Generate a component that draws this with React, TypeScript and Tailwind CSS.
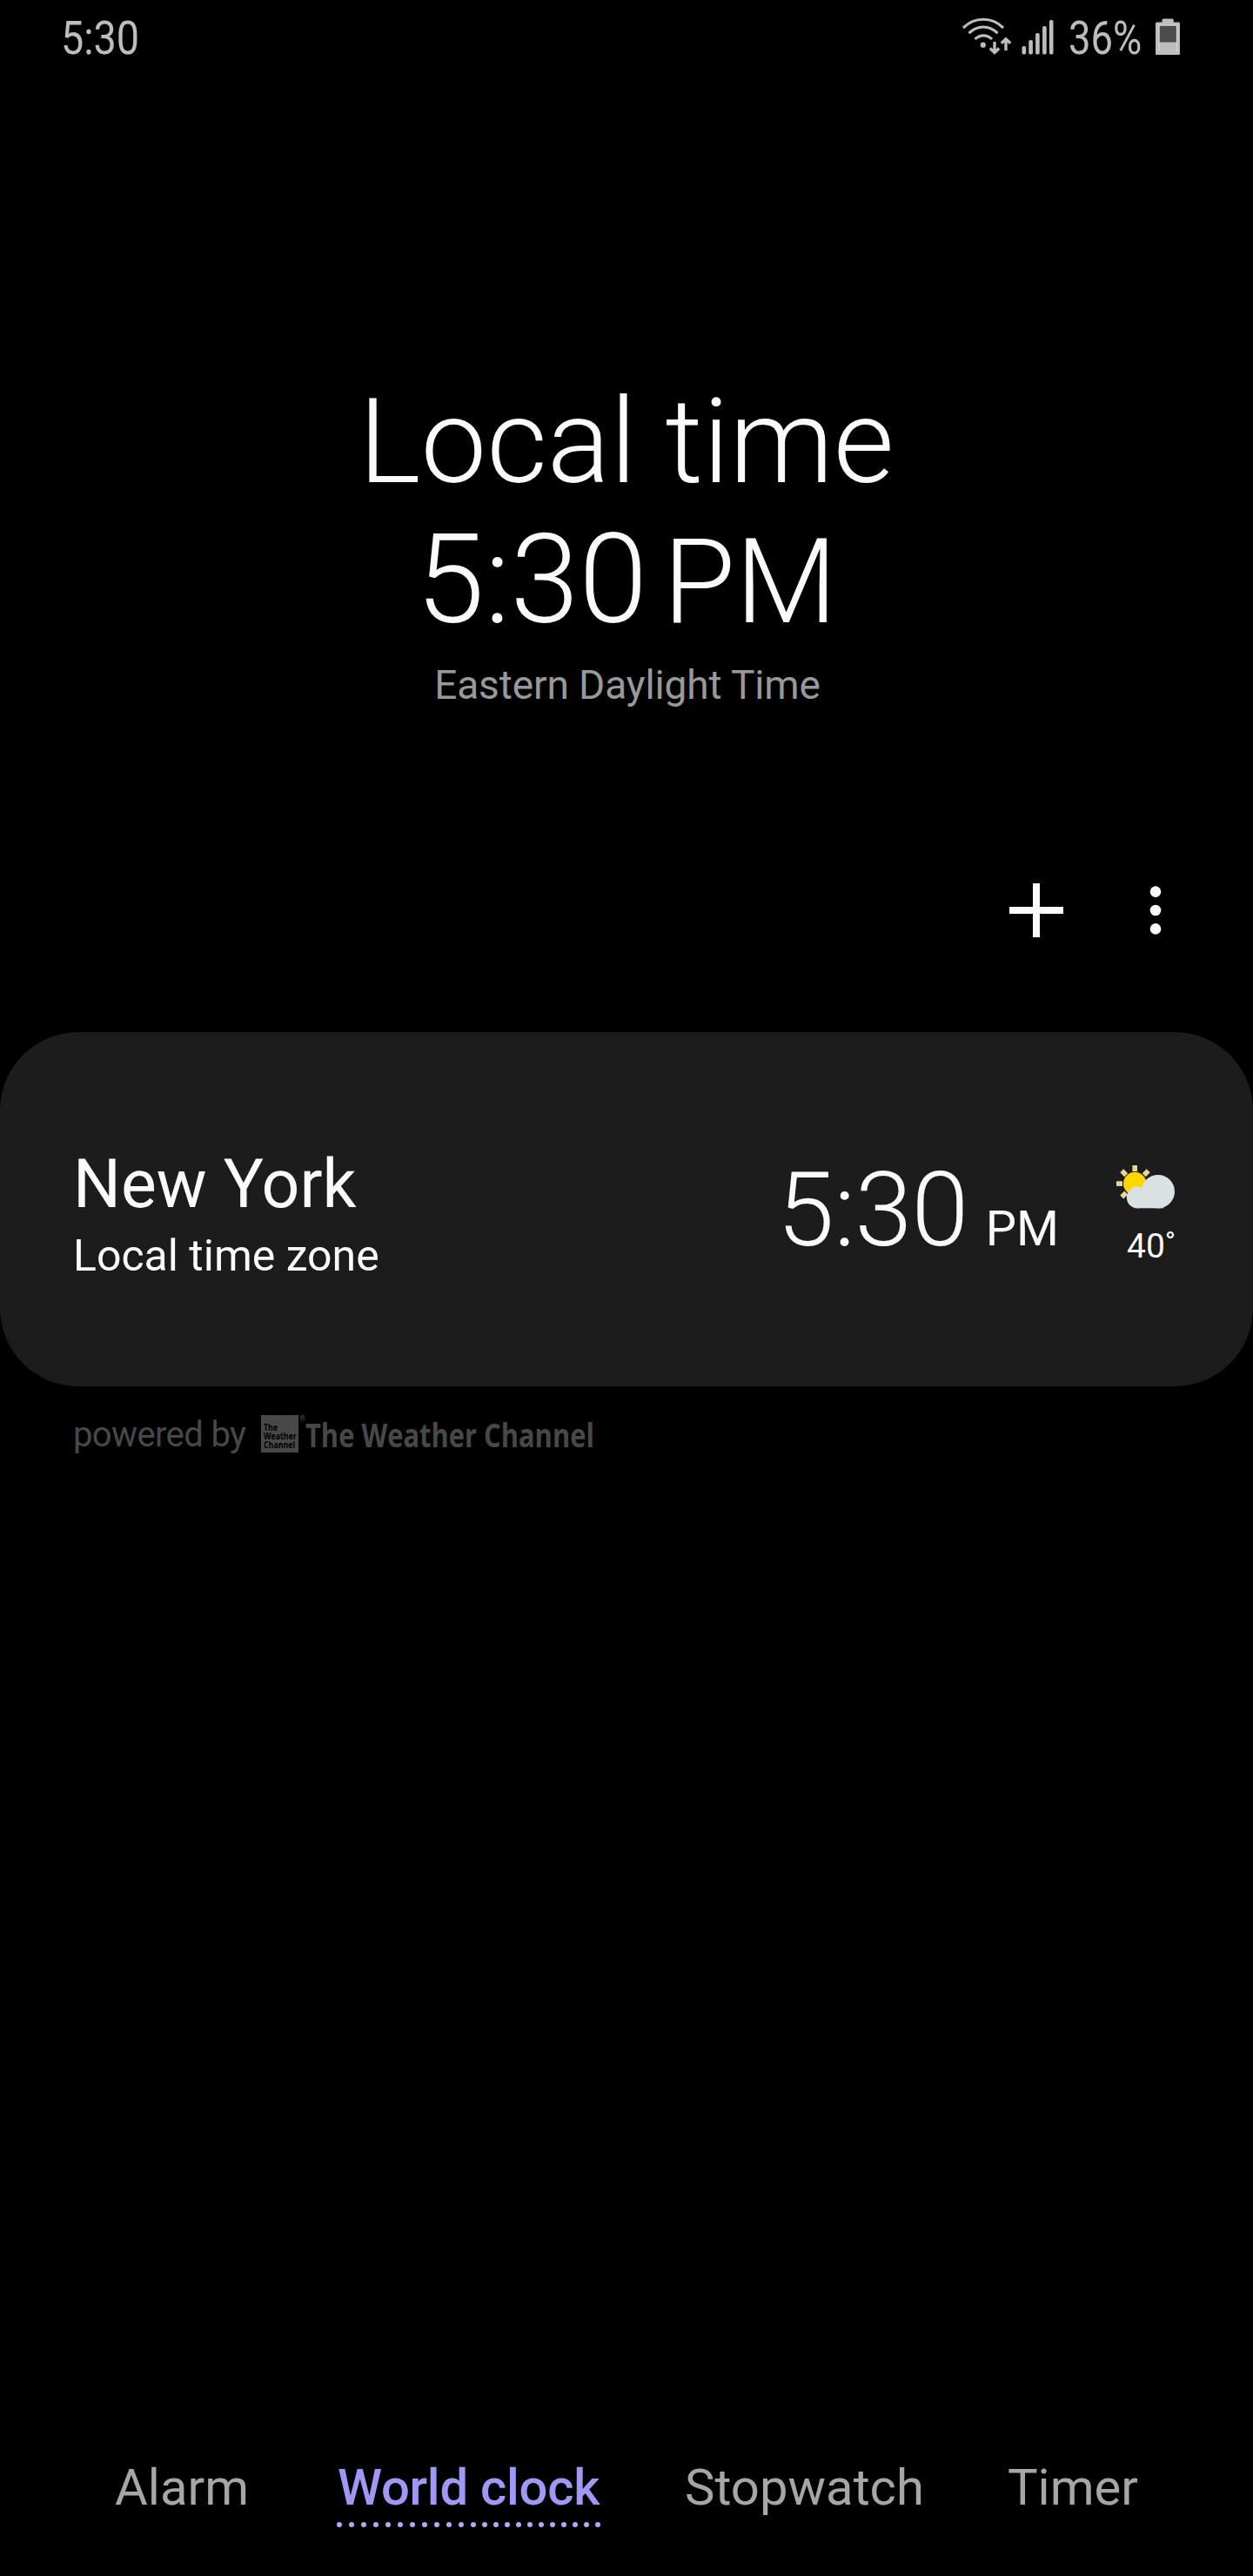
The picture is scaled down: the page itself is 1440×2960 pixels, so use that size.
const tabs = [
    { id: 'alarm', label: 'Alarm', left: 'ml-[132px]', active: false },
    { id: 'world', label: 'World clock', left: 'ml-[102px] w-[303px]', active: true },
    { id: 'stopwatch', label: 'Stopwatch', left: 'ml-[96px]', active: false },
    { id: 'timer', label: 'Timer', left: 'ml-[96px]', active: false },
];

const signalBars = [
    { x: 1, top: 31 },
    { x: 8.8, top: 24 },
    { x: 16.6, top: 16 },
    { x: 24.6, top: 8 },
    { x: 32.4, top: 1 },
];

const WifiIcon = () => (
    <svg className="w-[58px] h-[44px]" viewBox="0 0 58 44" fill="none" stroke="#bdbdbd">
        <path d="M2 12C15 -1 35 -1 48 12" strokeWidth="3.2" />
        <path d="M8.5 18.2C18 8.6 32 8.6 41.5 18.2" strokeWidth="3.2" />
        <path d="M15.5 25C21 19.4 29.5 19.4 35 25" strokeWidth="3.2" />
        <circle cx="24.8" cy="31.7" r="3.1" fill="#bdbdbd" stroke="none" />
        <path d="M38 28V40M32.8 35.4L38 40.4L43.2 35.4" strokeWidth="3.4" />
        <path d="M51 38V25M45.8 29.8L51 24.8L56.2 29.8" strokeWidth="3.4" />
    </svg>
);

const SignalIcon = () => (
    <svg className="w-[38px] h-[42px]" viewBox="0 0 38 42" fill="#bdbdbd">
        {signalBars.map((bar) => (
            <rect key={bar.x} x={bar.x - 0.5} y={bar.top} width="4.6" height={40.5 - bar.top} rx="1.8" />
        ))}
    </svg>
);

const BatteryIcon = () => (
    <svg className="w-[28px] h-[42px]" viewBox="0 0 28 42">
        <path d="M7.5 4.5V2.2Q7.5 0.5 9.5 0.5H19Q20.8 0.5 20.8 2.2V4.5H26.5Q28 4.5 28 6V41Q28 42 26.5 42H1.5Q0 42 0 41V6Q0 4.5 1.5 4.5Z" fill="#bdbdbd" />
        <rect x="4.5" y="8.5" width="19.5" height="19" fill="#4b4b4b" />
        <path d="M4 38V8H24.4V38" fill="none" stroke="#dedede" strokeWidth="1" />
    </svg>
);

const WeatherIcon = () => (
    <svg className="w-[68px] h-[50px]" viewBox="0 0 68 50">
        <g fill="#e6d69c">
            <rect x="18.4" y="0" width="5.6" height="7" />
            <rect x="0" y="18.3" width="7" height="5.6" />
            <rect x="-2.8" y="-3.5" width="5.6" height="7" transform="translate(8.7 8.7) rotate(-45)" />
            <rect x="-2.8" y="-3.5" width="5.6" height="7" transform="translate(34.2 8.7) rotate(45)" />
            <rect x="-2.8" y="-3.5" width="5.6" height="7" transform="translate(8.7 34) rotate(45)" />
        </g>
        <circle cx="21.2" cy="21" r="13.2" fill="#ffd600" />
        <g fill="#d9e2e2">
            <circle cx="47.8" cy="30.2" r="19.2" />
            <circle cx="24.2" cy="36.9" r="12.4" />
            <rect x="24" y="32" width="30" height="17.3" />
        </g>
    </svg>
);

const StatusBar = () => (
    <div className="h-[90px] flex items-start justify-between pl-[70px] text-[54px] leading-[64px] text-[#bdbdbd]">
        <span className="mt-[12px] origin-left scale-x-[0.865]">5:30</span>
        <div className="flex items-start w-[335px]">
            <div className="mt-[20px]"><WifiIcon /></div>
            <div className="mt-[22px] ml-[11px]"><SignalIcon /></div>
            <span className="mt-[12px] ml-[16px] w-[84px] origin-left scale-x-[0.84]">36%</span>
            <div className="mt-[20.5px] ml-[16px]"><BatteryIcon /></div>
        </div>
    </div>
);

const LocalTime = () => (
    <div className="h-[880px] pt-[337px] text-center">
        <h1 className="h-[162px] text-[135px] leading-[162px] font-light">Local time</h1>
        <div className="h-[162px] flex justify-center items-baseline font-light leading-[156px]">
            <span className="text-[142px]">5:30</span>
            <span className="ml-[18px] text-[135px]">PM</span>
        </div>
        <p className="mt-[6px] pl-[2px] text-[46px] leading-[60px] tracking-[-0.1px] text-[#999999]">Eastern Daylight Time</p>
    </div>
);

const Toolbar = () => (
    <div className="h-[216px] pt-[45px] flex">
        <svg className="ml-[1160px] w-[62px] h-[62px]" viewBox="0 0 62 62" fill="#fafafa">
            <path d="M27 0H35V27H62V35H35V62H27V35H0V27H27Z" />
        </svg>
        <svg className="ml-[99px] w-[14px] h-[62px]" viewBox="0 0 14 62" fill="#fafafa">
            <circle cx="7" cy="9.6" r="6.3" />
            <circle cx="7" cy="31" r="6.3" />
            <circle cx="7" cy="52.4" r="6.3" />
        </svg>
    </div>
);

const CityCard = () => (
    <div className="h-[407px] rounded-[90px] bg-[#1c1c1c] flex items-start">
        <div className="ml-[84px] mt-[130px] w-[809px]">
            <h2 className="text-[77px] leading-[90px]">New York</h2>
            <p className="mt-[7px] text-[50px] leading-[60px]">Local time zone</p>
        </div>
        <div className="mt-[135px] w-[323px] flex items-baseline leading-[140px]">
            <span className="text-[118.5px] font-light tracking-[-0.6px]">5:30</span>
            <span className="ml-[20px] text-[56px]">PM</span>
        </div>
        <div className="mt-[153px] ml-[67px] w-[68px]">
            <WeatherIcon />
            <p className="mt-[18px] pl-[12px] text-[39px] leading-[50px] whitespace-nowrap">
                40<span className="text-[33px] leading-none align-[6px]">°</span>
            </p>
        </div>
    </div>
);

const PoweredBy = () => (
    <div className="h-[1217px] pt-[26px] flex items-start text-[#484848]">
        <span className="ml-[84px] w-[216px] text-[40px] leading-[60px] tracking-[-0.63px]">powered by</span>
        <div className="mt-[7px] w-[43px] h-[43px] bg-[#484848] text-black">
            <div className="pt-[9px] ml-[3px] origin-left scale-x-[0.8] font-['Open_Sans',sans-serif] text-[11px] leading-[10px] font-bold">
                <div>The</div>
                <div>Weather</div>
                <div>Channel</div>
            </div>
        </div>
        <span className="mt-[6px] ml-[1px] w-[7px] text-[9px] leading-[10px]">®</span>
        <span className="origin-left scale-x-[0.834] font-['Open_Sans',sans-serif] text-[37px] leading-[60px] font-bold whitespace-nowrap">The Weather Channel</span>
    </div>
);

const BottomTabs = () => (
    <div className="h-[150px] pt-[14px] flex items-start text-[58px] leading-[68px] text-[#a6a6a6]">
        {tabs.map((tab) => (
            <div key={tab.id} className={tab.left}>
                <div className={tab.active ? 'font-medium tracking-[-0.25px] whitespace-nowrap text-[#9f99f5]' : ''}>{tab.label}</div>
                {tab.active && (
                    <svg className="mt-[5px] ml-[-1px] w-[304px] h-[8px]" viewBox="0 0 304 8" fill="#b3a8ee">
                        {Array.from({ length: 23 }, (_, i) => (
                            <circle key={i} cx={i < 11 ? 3 + i * 14 : 157 + (i - 11) * 13} cy="4" r="3" />
                        ))}
                    </svg>
                )}
            </div>
        ))}
    </div>
);

export default function App() {
    return (
        <div className="w-[1440px] h-[2960px] bg-black text-[#fafafa] font-[Roboto,sans-serif] overflow-hidden">
            <StatusBar />
            <LocalTime />
            <Toolbar />
            <CityCard />
            <PoweredBy />
            <BottomTabs />
        </div>
    );
}
